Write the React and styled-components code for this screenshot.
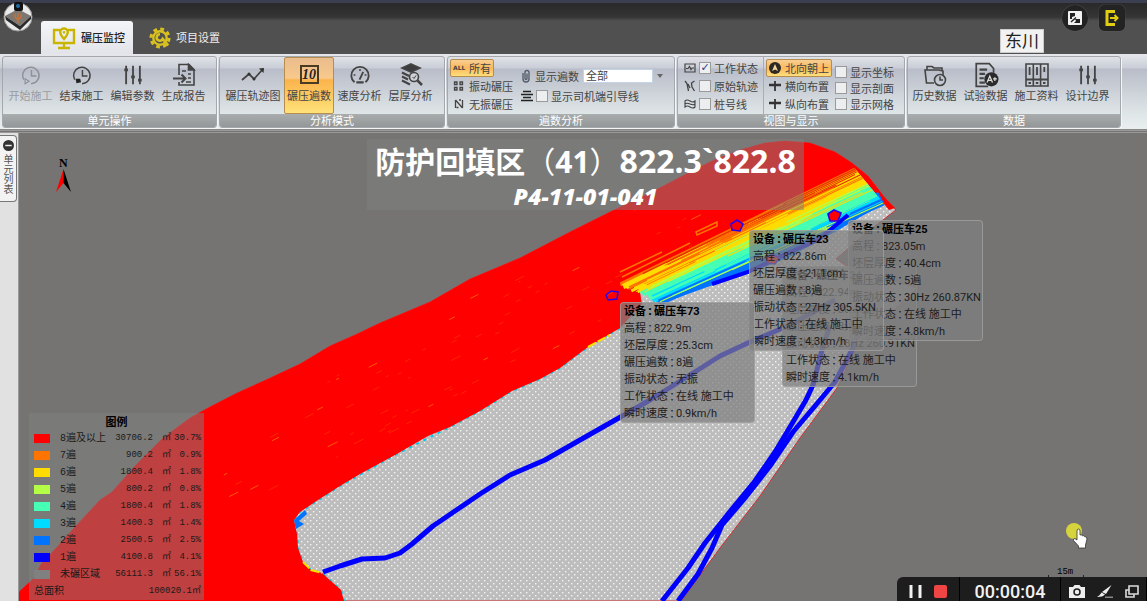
import React, { useState } from "react";
import styled, { createGlobalStyle } from "styled-components";

const GlobalStyle = createGlobalStyle`
  * {
    box-sizing: border-box;
  }
  body {
    margin: 0;
    font-family: "Noto Sans", "Noto Sans CJK SC", sans-serif;
    font-size: 11px;
    line-height: 17px;
    color: #333;
  }
  button, select, input {
    font: inherit;
    color: inherit;
    margin: 0;
  }
`;

// ---------- icons ----------
const Icon = ({ size = 24, w, h, box = "0 0 24 24", children, ...rest }) => (
  <svg
    width={w || size}
    height={h || size}
    viewBox={box}
    fill="none"
    stroke="#444"
    strokeWidth="1.6"
    aria-hidden="true"
    {...rest}
  >
    {children}
  </svg>
);

const StartIcon = () => (
  <Icon size={22} stroke="#8e9196">
    <path d="M4 17A9 9 0 1 1 12 21.500" />
    <path d="M12.500 6.500V13H18" />
    <path d="M5.500 16L10 18.800L5.500 21.500Z" strokeWidth="1.200" />
  </Icon>
);
const StopIcon = () => (
  <Icon size={22}>
    <path d="M4 17A9 9 0 1 1 12 21.500" />
    <path d="M12.500 6.500V13H18" />
    <path d="M5 16H10L11 20L6 21Z" fill="#222" stroke="none" />
  </Icon>
);
const SlidersIcon = () => (
  <Icon size={22} strokeWidth="2">
    <path d="M4.500 2V22M12 2V22M19.500 2V22" />
    <path d="M2.500 6.500H6.500M10 14H14M17.500 17.500H21.500" strokeWidth="3" />
  </Icon>
);
const ReportIcon = () => (
  <Icon>
    <path d="M7 12V1.500H17L22 6.500V22H7V19" />
    <path d="M16.500 1.500V7H22Z" fill="#444" />
    <path d="M1 15.500H13M9.500 11.500L13.500 15.500L9.500 19.500" strokeWidth="2" />
    <path d="M10 8H14M16 11H19M16 15H19M14 19H19" />
  </Icon>
);
const TrackIcon = () => (
  <Icon>
    <path d="M1 17L8 11L13 16L22 6" strokeWidth="1.800" />
    <path d="M18 5.500L23 5L22.500 10Z" fill="#333" stroke="none" />
    <circle cx="8" cy="11" r="1.500" fill="#333" stroke="none" />
    <circle cx="13" cy="16" r="1.500" fill="#333" stroke="none" />
  </Icon>
);
const TenBadge = styled.span`
  display: grid;
  place-items: center;
  width: 19px;
  height: 19px;
  border: 2px solid #4a3c22;
  font: italic bold 14px/15px "Liberation Serif", serif;
  color: #222;
`;
const GaugeIcon = () => (
  <Icon size={22}>
    <path d="M6 20A9.500 9.500 0 1 1 18 20" strokeWidth="2" />
    <path d="M8 20H16" strokeWidth="2.500" />
    <path d="M11.500 17L15.500 8.500" strokeWidth="2" />
    <path d="M5 12H7M17 12H19M12 5.500V7.500" />
  </Icon>
);
const LayersIcon = () => (
  <Icon>
    <path d="M12 1L21 5L12 9L3 5Z" fill="#3c3c3c" />
    <path d="M3 9.500L10 13M3 13.500L9 16.500M3 17.500L11 21.500" strokeWidth="2.200" />
    <circle cx="15" cy="14" r="4.500" fill="#ccd0d4" />
    <path d="M13.500 14L15 15.500L17 12.500" strokeWidth="1" />
    <path d="M18.500 17.500L23 22" strokeWidth="2.500" />
  </Icon>
);
const HistoryIcon = () => (
  <Icon>
    <path d="M11 20H3.500L2 7H16L20 8V12" />
    <path d="M4 7V3.500H9L11 5H19V7.500" />
    <circle cx="17" cy="17" r="5.500" />
    <path d="M17 13.500V17H20" />
  </Icon>
);
const TestIcon = () => (
  <Icon size={26}>
    <path d="M19 10V6L15 1.500H3V22.500H14" />
    <path d="M6 7H13M6 11H11M6 15H10M6 19H11" strokeWidth="2" />
    <circle cx="17" cy="16" r="6.500" fill="#2b2b2b" stroke="none" />
    <path d="M13 19L15.500 13L18 19M14 17H17M18.500 15.500H22M20.200 14V17.500" stroke="#ddd" strokeWidth="1.200" />
  </Icon>
);
const BindersIcon = () => (
  <Icon>
    <path d="M1 1H8.300V23H1ZM8.300 1H15.600V23H8.300ZM15.600 1H23V23H15.600Z" />
    <path d="M4.600 4V12M12 4V12M19.300 4V9M1 16.500H23" strokeWidth="1.800" />
    <path d="M3.500 20H6M10.800 20H13.300M18 20H20.500" strokeWidth="2" />
  </Icon>
);
const MonitorIcon = () => (
  <Icon size={24} stroke="#c9b500" strokeWidth="2.400">
    <path d="M8 4H2V17H22V4H16" />
    <path d="M12 17V21M6 22H18" />
    <path d="M12 13C9 9.500 8.200 8.500 8.200 6.300A3.800 3.800 0 0 1 15.800 6.300C15.800 8.500 15 9.500 12 13Z" />
    <circle cx="12" cy="6.300" r="0.800" strokeWidth="1.200" />
  </Icon>
);
const GearIcon = () => (
  <Icon size={22} stroke="#d8c020">
    <circle cx="12" cy="12" r="9.800" strokeWidth="3.400" strokeDasharray="4.100 3.597" />
    <circle cx="12" cy="12" r="7.300" strokeWidth="2.600" />
    <path d="M12 8A3.500 3.500 0 1 0 15 13L21 20" strokeWidth="2.800" />
  </Icon>
);
const NumbersIcon = () => (
  <Icon w={12} h={12}>
    <path d="M3 4h5v5h-5zM14 4h5v5h-5zM3 15h5v5h-5zM14 15h5v5h-5z" strokeWidth="2.600" />
  </Icon>
);
const NoVibeIcon = () => (
  <Icon w={12} h={12}>
    <path d="M5 4V20M5 4L19 20M19 4V20M12 4H16M7 19H11" strokeWidth="2.600" />
  </Icon>
);
const ClipIcon = () => (
  <Icon w={10} h={14} box="0 0 10 14" stroke="#56606e">
    <path d="M2 4V10A3 3 0 0 0 8 10V3.500A2 2 0 0 0 4 3.500V9.500A1 1 0 0 0 6 9.500V4.500" strokeWidth="1.400" />
  </Icon>
);
const LinesIcon = () => (
  <Icon w={12} h={12} box="0 0 12 12" stroke="#222">
    <path d="M2 1.500H10M0 4.500H12M2 7.500H10M0 10.500H12" strokeWidth="1.500" />
  </Icon>
);
const StatusIcon = () => (
  <Icon w={12} h={12} box="0 0 12 12">
    <path d="M1 2H11V10H1ZM2 6.500H4L5.500 4.500L7 7.500L8 6H10" strokeWidth="1.200" />
  </Icon>
);
const RawTrackIcon = () => (
  <Icon w={12} h={12} box="0 0 12 12">
    <path d="M1 1L3 3.500L4.500 11M4 4L6 8M10.500 1L7.500 3L8 7L10.500 11" strokeWidth="1.300" />
  </Icon>
);
const StakeIcon = () => (
  <Icon w={12} h={12} box="0 0 12 12">
    <path d="M1 3Q3 1 6 3T11 3V9Q9 11 6 9T1 9ZM1 6Q3 4.500 6 6T11 6" strokeWidth="1.100" />
  </Icon>
);
const NorthIcon = () => (
  <Icon w={12} h={12} box="0 0 12 12" stroke="none">
    <circle cx="6" cy="6" r="6" fill="#2d2a25" />
    <path d="M6 2L9 9L6 7.500L3 9Z" fill="#f4d69a" />
  </Icon>
);
const LayoutIcon = () => (
  <Icon w={12} h={12} box="0 0 12 12" stroke="#333">
    <path d="M0 5H12" strokeWidth="2.600" />
    <path d="M6 1V11" strokeWidth="1.800" />
  </Icon>
);

// ---------- header ----------
const Shell = styled.div`
  display: flex;
  flex-direction: column;
  min-height: 100vh;
  background: #505050;
`;
const Header = styled.header`
  display: flex;
  align-items: flex-end;
  height: 54px;
  padding: 0 22px 0 4px;
  background: linear-gradient(#3b3f50 0 3px, #292929 3px, #353535 17px, #505050 21px);
`;
const Logo = styled.svg`
  align-self: flex-start;
  margin: 1px 8px 0 -1px;
`;
const Tab = styled.button`
  display: flex;
  align-items: center;
  gap: 5px;
  height: 33px;
  padding: 0 8px 0 11px;
  border: 0;
  border-radius: 3px 3px 0 0;
  background: ${p => (p.$active ? "linear-gradient(#f4f5f8, #e2e4e9)" : "none")};
  color: ${p => (p.$active ? "#222" : "#eee")};
  font-weight: ${p => (p.$active ? 500 : 400)};
`;
const Spacer = styled.div`
  flex: 1;
`;
const ProjectName = styled.div`
  margin: 0 7px 1px 0;
  padding: 0 4px;
  border: 1px solid #ccc;
  background: #f2f2f2;
  color: #222;
  font-size: 17px;
  line-height: 22px;
`;
const HeadButton = styled.button`
  display: grid;
  place-items: center;
  align-self: flex-start;
  width: 26px;
  height: 26px;
  margin: 5px 0 0 11px;
  padding: 0;
  border: 0;
  border-radius: ${p => (p.$round ? "50%" : "5px")};
  background: #232323;
  box-shadow: 0 0 1px #777;
`;

// ---------- ribbon ----------
const Ribbon = styled.div`
  display: flex;
  gap: 2px;
  height: 76px;
  padding: 2px 2px 1px;
  border-bottom: 1px solid #888;
  background: linear-gradient(#e6e8ec, #c9cdd6 14px, #b9bdc9 15px, #dfe6e7 60px, #e9efef);
`;
const Group = styled.section`
  display: flex;
  flex-direction: column;
  width: ${p => p.$width}px;
  border: 1px solid #a4a8ad;
  border-radius: 3px;
  box-shadow: 1px 1px 0 #f5f6f7;
  overflow: hidden;
`;
const GroupBody = styled.div`
  display: flex;
  flex: 1;
  padding: 0 ${p => (p.$tight ? 1 : 2)}px;
`;
const Caption = styled.h2`
  margin: 0;
  height: 13px;
  background: linear-gradient(#a9adae, #939797);
  color: #fff;
  font-size: 11px;
  font-weight: 400;
  line-height: 13px;
  text-align: center;
`;
const BigButton = styled.button`
  display: flex;
  flex-direction: column;
  align-items: center;
  width: ${p => (p.$wide ? 62 : p.$active ? 50 : 51)}px;
  padding: 4px 0 0;
  border: 1px solid ${p => (p.$active ? "#b58d4e" : "transparent")};
  border-radius: 2px;
  background: ${p => (p.$active ? "linear-gradient(#e9bd8d, #f8c98c 20px, #fbb34c 22px, #ffe27a)" : "none")};
  color: ${p => (p.$muted ? "#999ca1" : "#444")};
  white-space: nowrap;
`;
const IconSlot = styled.span`
  display: grid;
  place-items: center;
  height: 25px;
`;
const Column = styled.div`
  display: flex;
  flex-direction: column;
  align-items: flex-start;
  gap: ${p => p.$gap || 0}px;
  padding: ${p => p.$pad || "2px 0 0"};
  border-left: 1px solid ${p => (p.$divided ? "#aab" : "transparent")};
`;
const SmallButton = styled.button`
  display: flex;
  align-items: center;
  gap: 4px;
  height: 18px;
  padding: 0 2px;
  border: 1px solid ${p => (p.$active ? "#b58d4e" : "transparent")};
  border-radius: 2px;
  background: ${p => (p.$active ? "linear-gradient(#f8cf94, #fbb85a 50%, #ffdf7c)" : "none")};
  color: #444;
  white-space: nowrap;
`;
const AllMark = styled.span`
  width: 12px;
  font: bold 6px/12px "DejaVu Sans", sans-serif;
`;
const Field = styled.label`
  display: flex;
  align-items: center;
  gap: ${p => p.$gap || 3}px;
  height: ${p => p.$height || 18}px;
  color: #444;
  white-space: nowrap;
`;
const Check = styled.input.attrs({ type: "checkbox" })`
  appearance: none;
  display: grid;
  place-items: center;
  width: 12px;
  height: 12px;
  border: 1px solid #9a9a9a;
  background: #eceeef;
  &:checked::after {
    content: "✓";
    color: #1c3f94;
    font: bold 11px/10px "DejaVu Sans", sans-serif;
  }
`;
const PassSelect = styled.select`
  appearance: none;
  width: 70px;
  height: 14px;
  padding: 0 2px;
  border: 1px solid #c5d3e6;
  border-radius: 0;
  background: #fff;
  line-height: 12px;
`;

const CheckField = ({ icon, label, height, defaultChecked }) => (
  <Field $height={height}>
    {icon}
    <Check defaultChecked={defaultChecked} />
    {label}
  </Field>
);

const Big = ({ icon, label, ...rest }) => (
  <BigButton {...rest}>
    <IconSlot>{icon}</IconSlot>
    {label}
  </BigButton>
);

// ---------- workspace ----------
const Workspace = styled.main`
  display: flex;
  flex: 1;
  border-top: 3px double #999;
  background: #757472;
`;
const Side = styled.aside`
  width: 19px;
  padding-top: 2px;
  border-right: 1px solid #999;
  background: #e1e1e1;
`;
const SideTab = styled.button`
  display: flex;
  flex-direction: column;
  align-items: center;
  gap: 3px;
  width: 17px;
  height: 67px;
  padding: 4px 0 0;
  border: 1px solid #777;
  border-left: 0;
  border-radius: 0 4px 4px 0;
  background: #f3f3f3;
  color: #555;
  span {
    font-size: 10px;
    line-height: 14px;
    writing-mode: vertical-rl;
  }
`;
const MapArea = styled.div`
  position: relative;
  flex: 1;
  overflow: hidden;
`;
const Terrain = styled.svg`
  position: absolute;
  inset: 0;
  width: 100%;
  height: 100%;
`;
const TitleRow = styled.div`
  position: relative;
  display: flex;
  justify-content: center;
  padding: 6px 0 0 5px;
`;
const TitlePanel = styled.div`
  width: 437px;
  height: 71px;
  background: rgba(128, 128, 128, 0.5);
  color: #fff;
  text-align: center;
  white-space: nowrap;
`;
const Title = styled.h1`
  margin: 0;
  font: 700 30px/42px "Noto Sans", "Noto Sans CJK SC", sans-serif;
`;
// the TC face centres full-width brackets in their cell
const Bracket = styled.span`
  font-family: "Noto Sans CJK TC", sans-serif;
  font-weight: 400;
`;
const Elevation = styled.span`
  font-size: 32px;
`;
const Code = styled.p`
  margin: 0;
  font: italic 800 23px/26px "Open Sans", sans-serif;
`;
const Legend = styled.table`
  position: absolute;
  left: 10px;
  bottom: 1px;
  width: 175px;
  table-layout: fixed;
  border-collapse: collapse;
  background: rgba(128, 128, 128, 0.5);
  color: #1a1a1a;
  font: 9px/17px "Liberation Mono", "Noto Sans CJK SC", monospace;
  caption {
    background: rgba(128, 128, 128, 0.5);
    color: #000;
    font: bold 11px/17px "Noto Sans CJK SC", sans-serif;
  }
  td, th {
    height: 17px;
    padding: 0;
    text-align: right;
    font-weight: 400;
    white-space: nowrap;
  }
  th {
    text-align: left;
    font-size: 10px;
  }
  th[colspan] {
    padding-left: 5px;
  }
  td:last-child {
    padding-right: 3px;
  }
`;
const Swatch = styled.i`
  display: block;
  width: 16px;
  height: 9px;
  margin-left: 5px;
  background: ${p => p.$color};
`;
const Tip = styled.dl`
  position: absolute;
  width: 135px;
  margin: 0;
  padding: 0 3px;
  border: 1px solid rgba(170, 170, 170, 0.6);
  border-radius: 4px;
  background: rgba(128, 128, 128, 0.73);
  color: #1c1c1c;
  font-family: Roboto, "Noto Sans CJK SC", sans-serif;
  white-space: nowrap;
  div {
    display: flex;
  }
  div:first-child {
    color: #000;
    font-weight: 700;
  }
  dt {
    display: flex;
  }
  dd {
    margin: 0;
  }
`;
const Colon = styled.span`
  display: flex;
  justify-content: center;
  width: 8px;
  font-family: "Noto Sans CJK TC", sans-serif;
`;
const Recorder = styled.div`
  position: absolute;
  right: 0;
  bottom: 0;
  display: flex;
  width: 250px;
  height: 24px;
  border-radius: 6px 0 0 0;
  background: #1d1d1d;
`;
const RecPart = styled.div`
  display: flex;
  align-items: flex-end;
  justify-content: center;
  gap: ${p => p.$gap || 0}px;
  width: ${p => p.$width}px;
  padding-bottom: ${p => p.$low || 0}px;
  border-right: 1px solid #000;
  color: #f2f2f2;
  font: 500 18px/18px Roboto, sans-serif;
`;
const RecButton = styled.button`
  display: flex;
  padding: 0;
  border: 0;
  background: none;
`;

const legendRows = [
  ["#ff0000", "8遍及以上", "30706.2", "30.7%"],
  ["#ff7300", "7遍", "900.2", "0.9%"],
  ["#ffdc00", "6遍", "1800.4", "1.8%"],
  ["#b4ff46", "5遍", "800.2", "0.8%"],
  ["#46ffb4", "4遍", "1800.4", "1.8%"],
  ["#00dcff", "3遍", "1400.3", "1.4%"],
  ["#0073ff", "2遍", "2500.5", "2.5%"],
  ["#0000ff", "1遍", "4100.8", "4.1%"],
  ["#808080", "未碾区域", "56111.3", "56.1%"]
];

const rollers = [
  { x: 763, y: 133, name: "碾压车24", alt: "822.94m", thick: "30.2cm", passes: "8遍", vib: "28Hz 260.91KN", speed: "4.1km/h" },
  { x: 829, y: 87, name: "碾压车25", alt: "823.05m", thick: "40.4cm", passes: "5遍", vib: "30Hz 260.87KN", speed: "4.8km/h" },
  { x: 730, y: 97, name: "碾压车23", alt: "822.86m", thick: "21.1cm", passes: "8遍", vib: "27Hz 305.5KN", speed: "4.3km/h" },
  { x: 601, y: 169, name: "碾压车73", alt: "822.9m", thick: "25.3cm", passes: "8遍", vib: "无振", speed: "0.9km/h" }
];

const RollerTip = ({ r }) => (
  <Tip style={{ left: r.x, top: r.y }}>
    {[
      ["设备", r.name],
      ["高程", r.alt],
      ["坯层厚度", r.thick],
      ["碾压遍数", r.passes],
      ["振动状态", r.vib],
      ["工作状态", "在线 施工中"],
      ["瞬时速度", r.speed]
    ].map(([k, v]) => (
      <div key={k}>
        <dt>
          {k}
          <Colon>：</Colon>
        </dt>
        <dd>{v}</dd>
      </div>
    ))}
  </Tip>
);

// repeatable noise, so the strips look the same on each render
const noise = n => {
  const v = Math.sin(n * 12.9898) * 43758.5453;
  return v - Math.floor(v);
};

// compaction strips, t runs from the upper edge of the band (0) to the lower one (1)
const stripColors = ["#ff7300", "#ffdc00", "#ffdc00", "#ff7300", "#ffdc00", "#ffdc00", "#ffdc00", "#46ffb4", "#46ffb4", "#46ffb4", "#46ffb4", "#46ffb4", "#00dcff", "#0073ff", "#0073ff"];
const accentColors = ["#e63200", "#e63200", "#ff7300", "#ffdc00", "#b4ff46", "#ffdc00", "#46ffb4", "#00dcff", "#b4ff46", "#0050ff"];
const bandPoint = (t, u) => {
  const left = [614 + t * 44, 287 + t * 18];
  const right = [855 + t * 29, 169 + t * 35];
  return [left[0] + (right[0] - left[0]) * u, left[1] + (right[1] - left[1]) * u];
};
const strips = Array.from({ length: 30 }, (_, i) => {
  const t = i / 29;
  const a = bandPoint(t, 0.01 + noise(i + 3) * 0.03);
  const b = bandPoint(t, 1);
  return { a, b, color: stripColors[Math.floor(t * 14.9)], w: 3 };
});
const accents = Array.from({ length: 100 }, (_, i) => {
  const t = noise(i + 41);
  const u = 0.02 + noise(i + 97) * 0.7;
  return {
    a: bandPoint(t, u),
    b: bandPoint(t, Math.min(1, u + 0.12 + noise(i + 7) * 0.5)),
    color: accentColors[Math.min(9, Math.floor(t * 8 + noise(i + 19) * 2))],
    w: 0.9 + noise(i) * 0.6
  };
});
const flecks = Array.from({ length: 80 }, (_, i) => {
  const x = 215 + noise(i + 211) * 480;
  const mid = 480 - (x - 215) * 0.53;
  const y = mid + (noise(i + 307) - 0.5) * 100;
  const len = 2 + noise(i + 5) * 8;
  return { a: [x, y], b: [x + len, y - len * 0.5], color: i % 5 ? "#ff3c00" : "#ff9a00", w: 0.6 };
});

const Strokes = ({ items }) =>
  items.map((s, i) => (
    <line key={i} x1={s.a[0]} y1={s.a[1]} x2={s.b[0]} y2={s.b[1]} stroke={s.color} strokeWidth={s.w} />
  ));

const OUTLINE =
  "M19 592L35 577L41 564L58 546L75 527L100 500L112 492L135 466L163 438L190 418L208 408L235 394L268 379L300 364L330 346L355 335L380 323L430 302L470 279L520 258L570 232L612 211L650 193L690 172L716 159L740 150L765 143L785 141L810 143L835 152L852 163L868 176L885 198L896 210L866 233L836 259L850 268L917 288L857 345L837 388L800 438L760 496L720 548L681 601H19Z";
const RED =
  "M19 592L35 577L41 564L58 546L75 527L100 500L112 492L135 466L163 438L190 418L208 408L235 394L268 379L300 364L330 346L355 335L380 323L430 302L470 279L520 258L570 232L612 211L650 193L690 172L716 159L740 150L765 143L785 141L810 143L835 152L852 163L868 176L885 198L895 208L889 210L856 170L640 292L642 304L620 328L588 347L560 368L540 379L512 391L480 411L450 427L428 436L395 455L360 474L340 486L318 500L300 512L294 520L297 534L298 548L303 562L311 570L322 573L332 582L341 590L344 601H19Z";

const TerrainMap = () => (
  <Terrain role="img" aria-label="碾压遍数分布图">
    <defs>
      <pattern id="dots" width="6" height="6" patternUnits="userSpaceOnUse">
        <rect width="6" height="6" fill="#bdbdbd" />
        <rect x="1" y="1" width="1.400" height="1.400" fill="#f4f4f4" />
        <rect x="4" y="4" width="1.400" height="1.400" fill="#f4f4f4" />
      </pattern>
    </defs>
    <g transform="translate(-19 -133)">
      <path d={OUTLINE} fill="url(#dots)" stroke="#d03030" strokeWidth="1" />
      <path d="M620 328L588 347L560 368L540 379L512 391L480 411L450 427L395 455L340 486L300 512L294 520L297 534L298 548L303 562L311 570L322 573L332 582L341 590L344 601" stroke="#00c8e6" strokeWidth="2" strokeDasharray="3 5" fill="none" />
      <path d={RED} fill="#ff0000" />
      <path d="M588 347L610 335M303 562L311 570L322 573" stroke="#ffe000" strokeWidth="2" fill="none" strokeDasharray="9 2" />
      <path d="M294 520L305 510L307 514L299 521L304 524L296 529Z" fill="#0073ff" />
      <Strokes items={flecks} />
      <path d="M660 304L713 285L750 273L790 257L835 232L884 203L878 192L650 298Z" fill="#0073ff" />
      <Strokes items={strips} />
      <Strokes items={accents} />
      <path d="M620 272L662 252M622 277L690 243M696 232L717 222L717 226L697 235Z" stroke="#ff7300" strokeWidth="1.500" fill="none" />
      <path d="M712 284L748 272L790 252L818 240L848 215" stroke="#0000ff" strokeWidth="4" fill="none" />
      <g stroke="#0000ff" strokeWidth="5" fill="none" strokeLinejoin="round">
        <path d="M323 572L340 566L362 559L385 558L400 553L412 544L433 526L455 511L480 494L510 475L545 460L580 440L617 419L650 400L690 375L720 356L750 342L790 325L835 300" />
        <path d="M662 601L688 568L705 543L728 514L755 481L775 452L793 422L806 400L813 385L822 350L830 325" />
        <path d="M678 601L698 574L712 548L722 525L745 498L770 466L793 432L815 406L835 382L852 350L860 330" />
      </g>
      <g stroke="#2a00e6" strokeWidth="1.600">
        <path d="M606 295L611 291L618 292L617 299L608 300Z" fill="none" />
        <path d="M731 224L737 220L743 224L740 231L732 230Z" fill="#ff0000" />
        <path d="M828 214L834 210L841 213L838 221L830 221Z" fill="#ff0000" />
        <path d="M766 258L772 254L779 258L775 264L768 263Z" fill="#ff0000" />
      </g>
      <path d="M63.500 169L56 192L63.500 183Z" fill="#ff0000" />
      <path d="M63.500 169L71 192L63.500 183Z" fill="#000" />
      <text x="59" y="167" fontFamily="Liberation Serif, serif" fontWeight="700" fontSize="12">N</text>
      <text x="1057" y="574" fontFamily="Liberation Mono, monospace" fontSize="9">15m</text>
      <path d="M1048.500 575V579M1083.500 575V579" stroke="#222" />
      <circle cx="1074" cy="531" r="8" fill="#d5d43c" />
      <path d="M1077 531Q1077 529 1078.500 529Q1080 529 1080 531V535Q1081.500 534.300 1082.300 535.700Q1083.800 535 1084.400 536.600Q1087 536.300 1087 539L1085.500 545V548H1078.500V546L1073.500 540.500Q1072.800 538.500 1075 538.500L1077 540Z" fill="#fff" stroke="#333" strokeWidth="0.800" />
    </g>
  </Terrain>
);

const App = () => {
  const [passes, setPasses] = useState("全部");
  return (
    <Shell>
      <GlobalStyle />
      <Header>
        <Logo width="30" height="32" viewBox="0 0 30 32" aria-hidden="true">
          <circle cx="15" cy="16" r="14" fill="#e9e9e9" stroke="#999" />
          <path d="M2 15L15 8L28 15L17 25Z" fill="#7d7771" />
          <path d="M2 15L17 25L28 15V18L17 29L3 19Z" fill="#2a2a2a" />
          <rect x="11" y="1" width="9" height="9" rx="2" fill="#111" />
          <circle cx="15" cy="5" r="2" fill="#1f6fa8" />
          <path d="M12 13V16L15 19L18 16V13M15 12V22" stroke="#c4713a" strokeWidth="1.500" fill="none" />
        </Logo>
        <Tab $active>
          <MonitorIcon />
          碾压监控
        </Tab>
        <Tab>
          <Spacer />
          <GearIcon />
          项目设置
        </Tab>
        <Spacer />
        <ProjectName>东川</ProjectName>
        <HeadButton $round aria-label="全屏">
          <Icon w={14} h={14} box="0 0 14 14" stroke="none">
            <rect width="14" height="14" rx="1" fill="#f2f2f2" />
            <path d="M2 2H7V5L4 6V8H2ZM7 8H12V12H6L8 10Z" fill="#222" />
            <path d="M3 11L8 6.500" stroke="#222" strokeWidth="1.400" />
          </Icon>
        </HeadButton>
        <HeadButton aria-label="退出">
          <Icon w={14} h={16} box="0 0 14 16" stroke="#e0cc10" strokeWidth="2">
            <path d="M10 1.500H2V14.500H10" strokeWidth="3" />
            <path d="M5 8H12M9.500 5L12.500 8L9.500 11" />
          </Icon>
        </HeadButton>
      </Header>

      <Ribbon>
        <Group $width={215}>
          <GroupBody>
            <Big icon={<StartIcon />} label="开始施工" $muted />
            <Big icon={<StopIcon />} label="结束施工" />
            <Big icon={<SlidersIcon />} label="编辑参数" />
            <Big icon={<ReportIcon />} label="生成报告" />
          </GroupBody>
          <Caption>单元操作</Caption>
        </Group>
        <Group $width={226}>
          <GroupBody>
            <Big icon={<TrackIcon />} label="碾压轨迹图" $wide />
            <Big icon={<TenBadge>10</TenBadge>} label="碾压遍数" $active />
            <Big icon={<GaugeIcon />} label="速度分析" />
            <Big icon={<LayersIcon />} label="层厚分析" />
          </GroupBody>
          <Caption>分析模式</Caption>
        </Group>
        <Group $width={228}>
          <GroupBody $tight>
            <Column>
              <SmallButton $active>
                <AllMark>ALL</AllMark>所有
              </SmallButton>
              <SmallButton>
                <NumbersIcon />
                振动碾压
              </SmallButton>
              <SmallButton>
                <NoVibeIcon />
                无振碾压
              </SmallButton>
            </Column>
            <Column $pad="10px 0 0 4px" $gap={2}>
              <Field $gap={4}>
                <ClipIcon />
                显示遍数
                <PassSelect value={passes} onChange={e => setPasses(e.target.value)}>
                  <option>全部</option>
                  <option>8遍</option>
                </PassSelect>
                <Icon w={6} h={4} box="0 0 6 4" stroke="none">
                  <path d="M0 0H6L3 4Z" fill="#666" />
                </Icon>
              </Field>
              <CheckField icon={<LinesIcon />} label="显示司机端引导线" />
            </Column>
          </GroupBody>
          <Caption>遍数分析</Caption>
        </Group>
        <Group $width={228}>
          <GroupBody $tight>
            <Column $pad="2px 5px 0 4px">
              <CheckField icon={<StatusIcon />} label="工作状态" defaultChecked />
              <CheckField icon={<RawTrackIcon />} label="原始轨迹" />
              <CheckField icon={<StakeIcon />} label="桩号线" />
            </Column>
            <Column $divided $pad="2px 2px 0">
              <SmallButton $active>
                <NorthIcon />
                北向朝上
              </SmallButton>
              <SmallButton>
                <LayoutIcon />
                横向布置
              </SmallButton>
              <SmallButton>
                <LayoutIcon />
                纵向布置
              </SmallButton>
            </Column>
            <Column $pad="7px 0 0">
              <CheckField label="显示坐标" height={16} />
              <CheckField label="显示剖面" height={16} />
              <CheckField label="显示网格" height={16} />
            </Column>
          </GroupBody>
          <Caption>视图与显示</Caption>
        </Group>
        <Group $width={214}>
          <GroupBody $tight>
            <Big icon={<HistoryIcon />} label="历史数据" />
            <Big icon={<TestIcon />} label="试验数据" />
            <Big icon={<BindersIcon />} label="施工资料" />
            <Big icon={<SlidersIcon />} label="设计边界" />
          </GroupBody>
          <Caption>数据</Caption>
        </Group>
      </Ribbon>

      <Workspace>
        <Side>
          <SideTab>
            <Icon w={11} h={11} box="0 0 12 12" stroke="none">
              <circle cx="6" cy="6" r="6" fill="#333" />
              <path d="M2.500 6H9.500" stroke="#eee" strokeWidth="1.600" />
            </Icon>
            <span>单元列表</span>
          </SideTab>
        </Side>
        <MapArea>
          <TerrainMap />
          <TitleRow>
            <TitlePanel>
              <Title>
                防护回填区<Bracket>（</Bracket>41<Bracket>）</Bracket>
                <Elevation>822.3`822.8</Elevation>
              </Title>
              <Code>P4-11-01-041</Code>
            </TitlePanel>
          </TitleRow>
          {rollers.map(r => (
            <RollerTip key={r.name} r={r} />
          ))}
          <Legend>
            <caption>图例</caption>
            <colgroup>
              <col width="31" />
              <col width="46" />
              <col width="47" />
              <col width="18" />
              <col width="33" />
            </colgroup>
            <tbody>
              {legendRows.map(([color, label, area, share]) => (
                <tr key={label}>
                  <td>
                    <Swatch $color={color} />
                  </td>
                  <th scope="row">{label}</th>
                  <td>{area}</td>
                  <td>㎡</td>
                  <td>{share}</td>
                </tr>
              ))}
              <tr>
                <th colSpan="2" scope="row">总面积</th>
                <td colSpan="3">100020.1㎡</td>
              </tr>
            </tbody>
          </Legend>
          <Recorder>
            <RecPart $width={63} $gap={12} $low={3}>
              <RecButton aria-label="暂停">
                <Icon w={13} h={13} box="0 0 13 13" stroke="#f2f2f2">
                  <path d="M2 0V13M11 0V13" strokeWidth="3" />
                </Icon>
              </RecButton>
              <RecButton aria-label="停止">
                <Icon w={13} h={13} box="0 0 13 13" stroke="none">
                  <rect width="13" height="13" rx="2" fill="#f04545" />
                </Icon>
              </RecButton>
            </RecPart>
            <RecPart $width={101}>00:00:04</RecPart>
            <RecPart $width={86} $gap={12} $low={3}>
              <RecButton aria-label="截图">
                <Icon w={16} h={13} box="0 0 16 13" stroke="none">
                  <path d="M0 2H4L5.500 0H10.500L12 2H16V13H0Z" fill="#eee" />
                  <circle cx="8" cy="7" r="3" stroke="#1d1d1d" strokeWidth="1.500" />
                </Icon>
              </RecButton>
              <RecButton aria-label="画笔">
                <Icon w={16} h={13} box="0 0 16 13" stroke="none">
                  <path d="M14.500 0L9 9L5 7ZM4.500 7.500L8 9.500Q6 12 0 12Q3 10.500 4.500 7.500Z" fill="#eee" />
                  <path d="M8 12.300H16" stroke="#888" />
                </Icon>
              </RecButton>
              <RecButton aria-label="窗口">
                <Icon w={14} h={13} box="0 0 14 13" stroke="#ddd">
                  <path d="M4 1H13V9H4ZM4 5H1V12H9V9" />
                </Icon>
              </RecButton>
            </RecPart>
          </Recorder>
        </MapArea>
      </Workspace>
    </Shell>
  );
};

export default App;
